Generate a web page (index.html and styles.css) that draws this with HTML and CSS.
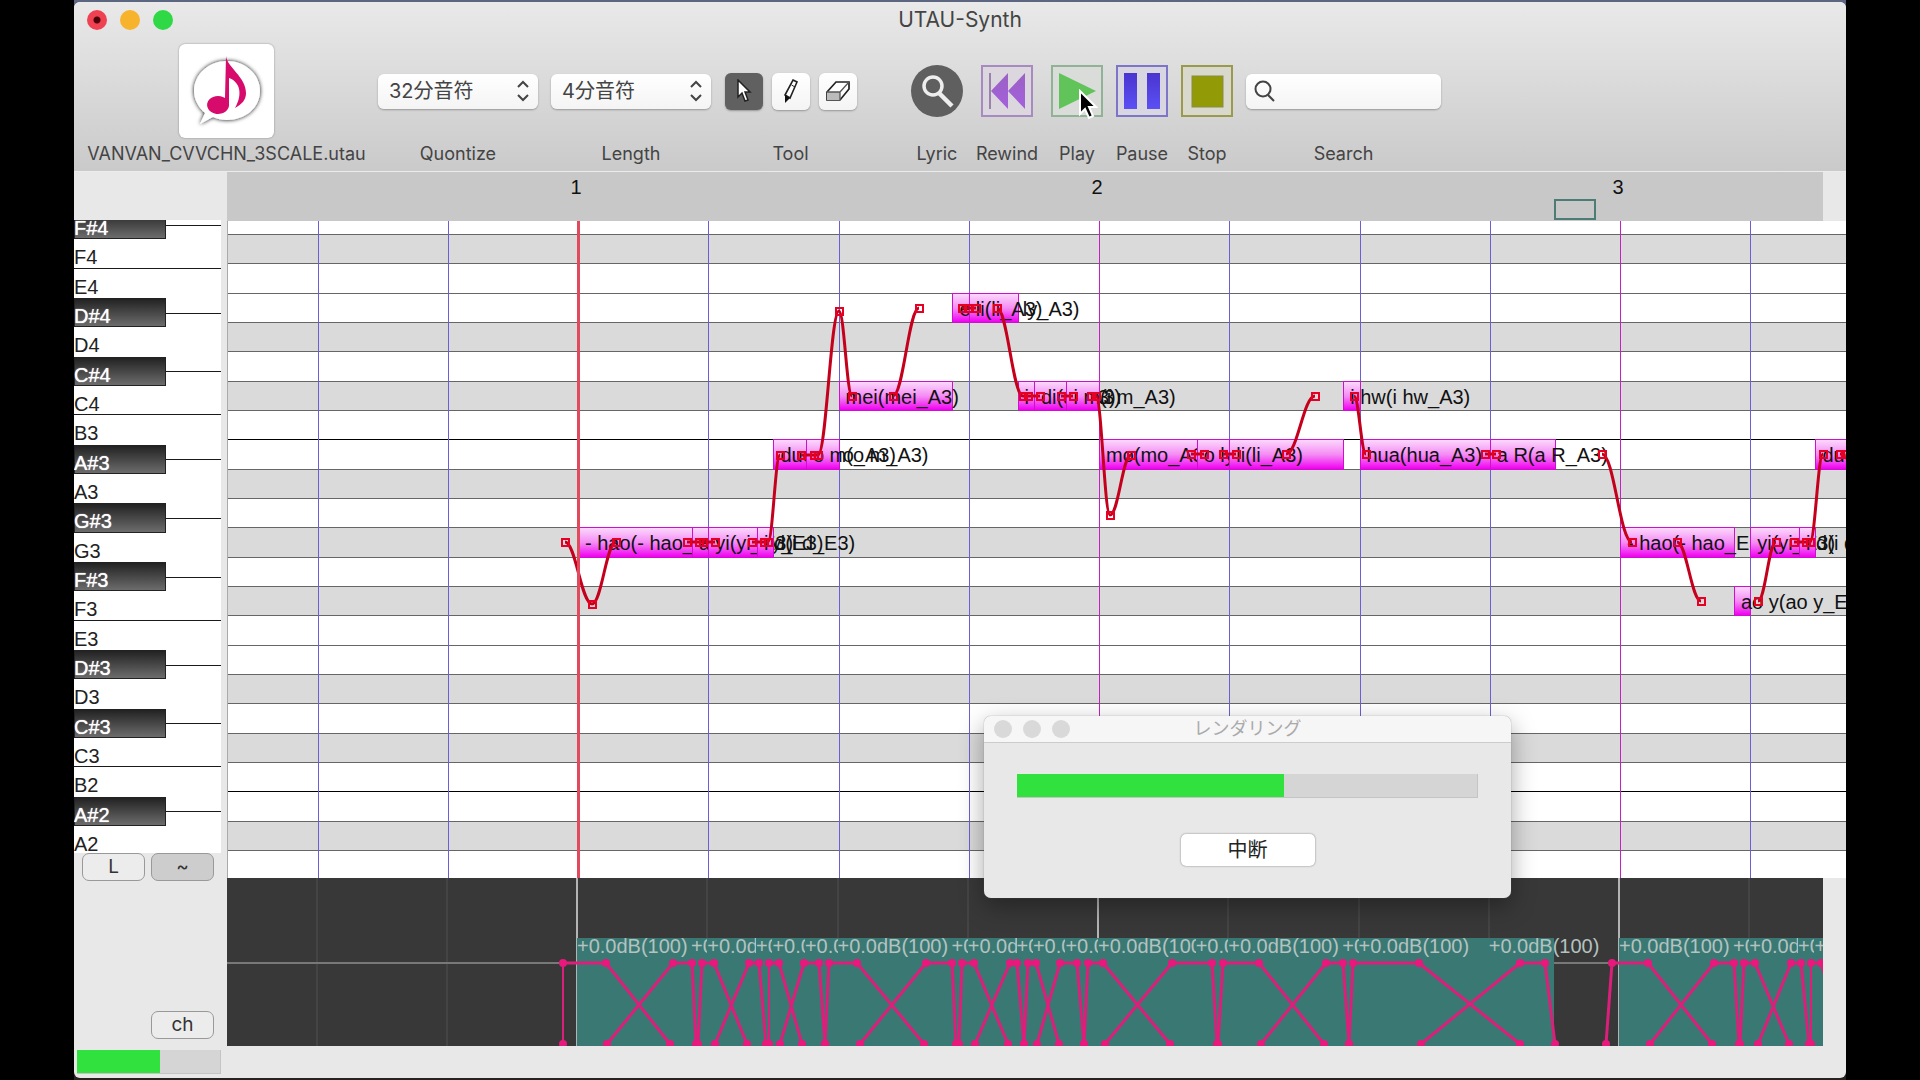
FILE: index.html
```html
<!DOCTYPE html>
<html lang="ja">
<head>
<meta charset="utf-8">
<title>UTAU-Synth</title>
<link rel="stylesheet" href="styles.css">
</head>
<body>
<div class="desktop">
<main class="window">
  <header class="header">
    <div class="titlebar">
      <div class="lights">
        <button class="light light-close" aria-label="Close"></button>
        <button class="light light-min" aria-label="Minimize"></button>
        <button class="light light-zoom" aria-label="Zoom"></button>
      </div>
      <h1 class="title">UTAU-Synth</h1>
    </div>
    <div class="toolbar">
      <div class="item item-file">
        <div class="control">
          <svg class="logo" width="95" height="94" viewBox="0 0 95 94" aria-hidden="true">
            <defs><filter id="soft" x="-30%" y="-30%" width="160%" height="160%"><feDropShadow dx="0" dy="0" stdDeviation="2" flood-color="#111" flood-opacity="1"/></filter></defs>
            <path filter="url(#soft)" d="M48 17C66 17 81 30 81 47S66 76 48 76C43 76 38 75 34 73L21 80L26 69C19 63 15 55 15 47C15 30 30 17 48 17Z" fill="#fff"/>
            <path d="M47 12C48 23 67 33 67 49C67 56 63 60 56 64C64 50 61 38 50 34V60A11 9 0 1 1 46 54Z" fill="#d60b6b"/>
          </svg>
        </div>
        <span class="label">VANVAN_CVVCHN_3SCALE.utau</span>
      </div>
      <div class="item item-select">
        <div class="control">
          <select class="select" id="quantize"><option>32分音符</option></select>
          <svg class="chevrons" width="14" height="22" viewBox="0 0 14 22" aria-hidden="true"><path d="M2 7L7 2L12 7M2 15L7 20L12 15"/></svg>
        </div>
        <label class="label" for="quantize">Quontize</label>
      </div>
      <div class="item item-select">
        <div class="control">
          <select class="select" id="length"><option>4分音符</option></select>
          <svg class="chevrons" width="14" height="22" viewBox="0 0 14 22" aria-hidden="true"><path d="M2 7L7 2L12 7M2 15L7 20L12 15"/></svg>
        </div>
        <label class="label" for="length">Length</label>
      </div>
      <div class="item item-tools">
        <div class="control tools">
          <button class="tool tool-on" aria-label="Pointer"><svg width="16" height="24" viewBox="0 0 16 24"><path d="M2 1V18L6 14L9 22L12 21L9 13H14Z" fill="#fff" stroke="#222" stroke-width="1.5"/></svg></button>
          <button class="tool" aria-label="Pencil"><svg width="18" height="26" viewBox="0 0 18 26"><path d="M11 2L15 4L8 20L3 17Z" fill="#fff" stroke="#222" stroke-width="1.6"/><path d="M3 17L8 20L3 25Z" fill="#111"/><path d="M9.500 7L13 9" stroke="#222"/></svg></button>
          <button class="tool" aria-label="Eraser"><svg width="28" height="24" viewBox="0 0 28 24"><path d="M3 13L12 3H25V10L16 21H3Z" fill="#fff" stroke="#222" stroke-width="1.7"/><path d="M3 13H16V21H3Z" fill="#bbb"/><path d="M3 13H16V21M16 13L25 3" fill="none" stroke="#555" stroke-width="1.300"/></svg></button>
        </div>
        <span class="label">Tool</span>
      </div>
      <div class="item item-lyric">
        <div class="control"><button class="icon" aria-label="Lyric"><svg width="52" height="52" viewBox="0 0 52 52"><circle cx="26" cy="26" r="26" fill="#5f5f5f"/><circle cx="22" cy="21" r="9" fill="none" stroke="#eee" stroke-width="3.500"/><path d="M28 28L41 41" stroke="#eee" stroke-width="4.500"/></svg></button></div>
        <span class="label">Lyric</span>
      </div>
      <div class="item item-rewind">
        <div class="control"><button class="icon" aria-label="Rewind"><svg width="52" height="52" viewBox="0 0 52 52"><defs><linearGradient id="gr" x2="0" y2="1"><stop stop-color="#9b62c4"/><stop offset="1" stop-color="#a45fdc"/></linearGradient></defs><rect x="1" y="1" width="50" height="50" fill="#dcd6de" stroke="#a78ac0" stroke-width="2"/><path d="M9 8V44" stroke="#9a82ac" stroke-width="2"/><path d="M27 8V44L10 26ZM44 8V44L27 26Z" fill="url(#gr)"/></svg></button></div>
        <span class="label">Rewind</span>
      </div>
      <div class="item">
        <div class="control"><button class="icon" aria-label="Play"><svg width="52" height="52" viewBox="0 0 52 52"><rect x="1" y="1" width="50" height="50" fill="#dadcda" stroke="#92b296" stroke-width="2"/><path d="M8 8L45 26L8 44Z" fill="#60c45a"/></svg></button></div>
        <span class="label">Play</span>
      </div>
      <div class="item">
        <div class="control"><button class="icon" aria-label="Pause"><svg width="52" height="52" viewBox="0 0 52 52"><defs><linearGradient id="gp" x2="0" y2="1"><stop stop-color="#4a35cf"/><stop offset="1" stop-color="#5b50f4"/></linearGradient></defs><rect x="1" y="1" width="50" height="50" fill="#d8d6e0" stroke="#7d76c8" stroke-width="2"/><path d="M8 8H21V44H8ZM31 8H44V44H31Z" fill="url(#gp)"/></svg></button></div>
        <span class="label">Pause</span>
      </div>
      <div class="item">
        <div class="control"><button class="icon" aria-label="Stop"><svg width="52" height="52" viewBox="0 0 52 52"><rect x="1" y="1" width="50" height="50" fill="#d9d8cc" stroke="#9a9a4c" stroke-width="2"/><rect x="11" y="11" width="31" height="31" fill="#929a06" stroke="#8a8c48"/></svg></button></div>
        <span class="label">Stop</span>
      </div>
      <div class="item item-search">
        <div class="control">
          <input class="search" id="search" type="text">
          <svg class="lens" width="22" height="22" viewBox="0 0 22 22" aria-hidden="true"><circle cx="9" cy="9" r="7.500"/><path d="M14 15L20 21"/></svg>
        </div>
        <label class="label" for="search">Search</label>
      </div>
    </div>
    <svg class="pointer" width="20" height="32" viewBox="0 0 20 32" aria-hidden="true"><path d="M2 2V25L7 20L11 29L15 27L11 18H18Z" fill="#000" stroke="#fff" stroke-width="2"/></svg>
  </header>

  <div class="editor">
    <aside class="side">
      <div class="corner"></div>
      <div class="keys"><div class="keylist" id="keys"></div></div>
      <div class="side-panel">
        <div class="side-row"><button class="small">L</button><button class="small small-on">~</button></div>
        <div class="side-row"><button class="small">ch</button></div>
      </div>
    </aside>
    <section class="score">
      <div class="ruler" id="ruler"><span class="view"></span></div>
      <div class="roll">
        <div class="rows" id="rows"></div>
        <div class="layer" id="lines"></div>
        <div class="layer" id="notes"></div>
        <svg class="curves" id="curves" aria-hidden="true"></svg>
      </div>
      <div class="levels">
        <div class="layer" id="marks"></div>
        <div class="zero"></div>
        <div class="layer" id="events"></div>
        <svg class="curves" id="envelopes" aria-hidden="true"></svg>
      </div>
    </section>
  </div>

  <footer class="status"><div class="meter meter-status"><div class="fill" style="width:58%"></div></div></footer>

  <section class="dialog" role="dialog" aria-labelledby="dialog-title">
    <div class="dialog-bar">
      <div class="dialog-lights"><span></span><span></span><span></span></div>
      <h2 class="dialog-title" id="dialog-title">レンダリング</h2>
    </div>
    <div class="dialog-body">
      <div class="meter meter-dialog"><div class="fill" style="width:58%"></div></div>
      <button class="abort">中断</button>
    </div>
  </section>
</main>
</div>
<script src="app.js"></script>
</body>
</html>
```

FILE: styles.css
```css
* { box-sizing: border-box; }

:root {
  --bar: 521px;
  --octave: 352px;
  --origin: 351px;
  --ui: Inter, "Noto Sans CJK JP", sans-serif;
  --plain: "Liberation Sans", "Noto Sans CJK JP", sans-serif;
}

body { margin: 0; background: #000; font-family: var(--ui); color: #444; }
button, select, input { font: inherit; color: inherit; border: 0; padding: 0; margin: 0; }

.desktop { margin: 0 74px; padding: 2px 0; background: linear-gradient(#5c6680, #2a2d33 50%, #26231f); }
.window { position: relative; background: #e8e8e8; border-radius: 6px; overflow: hidden; }

/* header */
.header { position: relative; height: 170px; background: linear-gradient(#e9e9e9, #cacaca); border-bottom: 1px solid #ececec; }
.titlebar { display: grid; grid-template-columns: 1fr auto 1fr; align-items: center; height: 36px; padding: 0 13px; }
.lights { display: flex; gap: 13px; }
.light { width: 20px; height: 20px; border-radius: 50%; }
.light-close { background: radial-gradient(#4a0006 3px, #ef4152 4px); }
.light-min { background: #f7b32c; }
.light-zoom { background: #2fd945; }
.title { margin: 0; font-size: 21px; line-height: 24px; font-weight: 400; }
.toolbar { display: flex; gap: 13px; padding: 6px 14px 0; }
.item { display: flex; flex-direction: column; align-items: center; width: 52px; }
.item-file { width: 277px; }
.item-select { width: 160px; }
.item-tools { width: 133px; }
.item-lyric { margin-left: 41px; }
.item-rewind { width: 62px; }
.item-search { width: 195px; }
.control { position: relative; display: flex; align-items: center; height: 94px; }
.item-file .control { background: #fff; border-radius: 6px; box-shadow: 0 0 2px rgba(0, 0, 0, .4); }
.label { margin-top: 4px; font-size: 18px; line-height: 24px; white-space: nowrap; }
.select { appearance: none; width: 160px; height: 35px; padding: 0 11px; border-radius: 6px; background: linear-gradient(#fff, #f4f4f4); box-shadow: 0 1px 2px rgba(0, 0, 0, .3); font-size: 20px; }
.chevrons { position: absolute; right: 8px; fill: none; stroke: #444; stroke-width: 2; pointer-events: none; }
.tools { gap: 9px; }
.tool { display: flex; align-items: center; justify-content: center; width: 38px; height: 37px; border-radius: 6px; background: linear-gradient(#fff, #f4f4f4); box-shadow: 0 1px 2px rgba(0, 0, 0, .3); }
.tool-on { background: #606060; }
.icon { display: block; width: 52px; height: 52px; background: none; }
.icon svg { display: block; }
.search { width: 195px; height: 35px; padding: 0 8px 0 36px; border-radius: 6px; background: linear-gradient(#fff, #f4f4f4); box-shadow: 0 1px 2px rgba(0, 0, 0, .3); font-size: 18px; }
.lens { position: absolute; left: 8px; fill: none; stroke: #444; stroke-width: 2; }
.pointer { position: absolute; left: 1004px; top: 87px; }

/* editor */
.editor { display: grid; grid-template-columns: 153px minmax(0, 1fr); }
.side { display: flex; flex-direction: column; }
.corner { height: 48px; }
.keys { height: 633px; width: 147px; overflow: hidden; background: #fff; font-family: var(--plain); font-size: 20px; color: #222; }
.keylist { margin-top: -10px; }
.key { position: relative; display: flex; align-items: center; height: calc(var(--octave) / 12); padding-top: 8px; }
.key-edge { border-bottom: 1px solid #1a1a1a; }
.key-black { color: #fff; text-shadow: 0 0 1px #fff; }
.key-black::before { content: ""; position: absolute; inset: 0 55px 0 0; background: linear-gradient(#222, #6c6c6c); border: 1px solid #222; }
.key-black::after { content: ""; position: absolute; left: 92px; right: 0; top: 50%; height: 1px; background: #1a1a1a; }
.key span { position: relative; }
.side-panel { flex: 1; display: flex; flex-direction: column; justify-content: space-between; padding: 0 13px 7px 8px; }
.side-row { display: flex; justify-content: flex-end; gap: 6px; }
.small { width: 63px; height: 28px; border: 1px solid #999; border-radius: 7px; background: #ececec; color: #333; font-size: 19px; line-height: 26px; }
.small-on { background: #cdcdcd; }

.score { display: flex; flex-direction: column; min-width: 0; }
.ruler { position: relative; height: 49px; margin-right: 23px; background: #c8c8c8; overflow: hidden; font-family: var(--plain); color: #111; }
.bar-number { position: absolute; top: 3px; left: calc(var(--origin) + var(--bar) * var(--n)); width: 20px; margin-left: -12px; text-align: center; font-size: 20px; line-height: 24px; }
.view { position: absolute; left: 1327px; bottom: 1px; width: 42px; height: 21px; border: 2px solid #4d7c76; }
.roll { position: relative; overflow: hidden; padding-top: 13px; background: #fff; border-left: 1px solid #aaa; }
.row { height: calc(var(--octave) / 12); border-top: 1px solid #666; }
.row-dark { background: #dadada; }
.row-c { border-color: #000; }
.row:last-child { height: 28px; }
.layer { position: absolute; inset: 0; }
.line { position: absolute; top: 0; bottom: 0; left: calc(var(--origin) + var(--bar) * var(--t) / 32 - 1px); width: 1px; background: #6a5fd6; }
.line-bar { background: #c321c3; }
.line-play { width: 3px; margin-left: -1px; background: #e04a5c; z-index: 1; }
.note { position: absolute; left: calc(var(--origin) + var(--bar) * var(--t) / 32 - 1px); top: calc(13px + var(--octave) * var(--row) / 12); width: calc(var(--bar) * var(--len) / 32 + 1px); height: calc(var(--octave) / 12 + 1px); padding: 1px 0 0 6px; border: 1px solid #cc10cc; background: linear-gradient(#fbd8fb, #f58cf5 50%, #f000f0); font-family: var(--plain); font-size: 20px; line-height: 28px; color: #111; white-space: nowrap; }
.curves { position: absolute; left: 0; top: 0; width: 100%; height: 100%; fill: none; }
.curve { stroke: #c4001c; stroke-width: 3; }
.handle { stroke: #e60024; stroke-width: 2; }

/* levels */
.levels { position: relative; height: 168px; margin-right: 23px; background: #383838; overflow: hidden; }
.mark { position: absolute; top: 0; bottom: 0; left: calc(var(--origin) + var(--bar) * var(--t) / 32 - 2px); width: 2px; background: #444; }
.mark-bar { background: #b4b4b4; }
.zero { position: absolute; left: 0; right: 0; top: 84px; height: 2px; background: #787878; }
.event { position: absolute; bottom: 0; left: calc(var(--origin) + var(--bar) * var(--t) / 32 - 1px); width: calc(var(--bar) * var(--len) / 32); height: 108px; background: #3a7873; color: #b4c2c0; font-family: var(--plain); font-size: 20px; line-height: 17px; white-space: nowrap; }
.envelope { stroke: #db1f7a; stroke-width: 3; }
.envelope-edge { stroke-width: 2; }
.knob { fill: #e8187c; }

.status { display: flex; align-items: center; height: 32px; padding: 0 3px; }
.meter { background: #d5d5d5; border: 1px solid #c4c4c4; border-width: 0 1px 1px 0; }
.fill { height: 100%; background: #31e13e; }
.meter-status { width: 144px; height: 24px; }

/* dialog */
.dialog { position: absolute; left: 910px; top: 714px; width: 527px; background: #e8e8e8; border-radius: 7px; box-shadow: 0 0 1px #666, 0 8px 24px rgba(0, 0, 0, .35); overflow: hidden; }
.dialog-bar { display: grid; grid-template-columns: 1fr auto 1fr; align-items: center; height: 27px; padding: 0 10px; background: #f6f6f6; border-bottom: 1px solid #ccc; }
.dialog-lights { display: flex; gap: 11px; }
.dialog-lights span { width: 18px; height: 18px; border-radius: 50%; background: #d9d9d9; }
.dialog-title { margin: 0; font-size: 18px; line-height: 24px; font-weight: 400; color: #aaa; }
.dialog-body { display: flex; flex-direction: column; align-items: center; gap: 36px; padding: 31px 33px 32px; }
.meter-dialog { width: 100%; height: 24px; }
.abort { width: 134px; height: 32px; border-radius: 5px; background: #fff; box-shadow: 0 0 2px rgba(0, 0, 0, .5); color: #222; font-size: 20px; line-height: 30px; }
```

FILE: app.js
```js
const byId = (id) => document.getElementById(id);

function add(parent, cls, vars, text) {
  const el = document.createElement("div");
  el.className = cls;
  for (const name in vars) el.style.setProperty("--" + name, vars[name]);
  if (text !== undefined) el.textContent = text;
  parent.append(el);
  return el;
}

// keyboard, highest pitch first
"F#4 F4 E4 D#4 D4 C#4 C4 B3 A#3 A3 G#3 G3 F#3 F3 E3 D#3 D3 C#3 C3 B2 A#2 A2".split(" ").forEach((name) => {
  const cls = name.includes("#") ? "key key-black" : /[FC]/.test(name) ? "key key-edge" : "key";
  const key = add(byId("keys"), cls, {});
  const label = document.createElement("span");
  label.textContent = name;
  key.append(label);
});

// roll rows: shaded semitones and octave borders repeat every twelve
for (let i = 0; i < 22; i++) {
  const step = i % 12;
  let cls = "row";
  if ([0, 3, 5, 8, 10].includes(step)) cls += " row-dark";
  if (step === 7) cls += " row-c";
  add(byId("rows"), cls, {});
}

// beats, in 32nd notes from bar 1
for (let t = -16; t < 160; t += 8) {
  add(byId("lines"), t === 0 ? "line line-play" : t > 0 && t % 32 === 0 ? "line line-bar" : "line", { t });
  add(byId("marks"), t >= 0 && t % 32 === 0 ? "mark mark-bar" : "mark", { t });
}
for (let n = 0; n < 5; n++) add(byId("ruler"), "bar-number", { n }, n + 1);

// start, length, row, lyric
const notes = [
  [0, 7, 10, "- hao(- hao_E3)"], [7, 1, 10, "ao y(ao y_E3)"], [8, 3, 10, "yi(yi_E3)"], [11, 1, 10, "i d(i d_E3)"],
  [12, 2, 7, "duo(duo_A3)"], [14, 2, 7, "o m(o m_A3)"], [16, 7, 5, "mei(mei_A3)"],
  [23, 1, 2, "ei ly(ei ly_A3)"], [24, 3, 2, "li(li_A3)"], [27, 1, 5, "i d(i d_A3)"], [28, 2, 5, "di(di_A3)"], [30, 2, 5, "i m(i m_A3)"],
  [32, 6, 7, "mo(mo_A3)"], [38, 2, 7, "o ly(o ly_A3)"], [40, 7, 7, "li(li_A3)"], [47, 1, 5, "i hw(i hw_A3)"],
  [48, 8, 7, "hua(hua_A3)"], [56, 4, 7, "a R(a R_A3)"],
  [64, 7, 10, "- hao(- hao_E3)"], [71, 1, 12, "ao y(ao y_E3)"], [72, 3, 10, "yi(yi_E3)"], [75, 1, 10, "i d(i d_E3)"], [76, 2, 7, "duo(duo_A3)"]
];
for (const [t, len, row, lyric] of notes) {
  add(byId("notes"), "note", { t, len, row }, lyric);
  add(byId("events"), "event", { t, len }, "+0.0dB(100)");
}

function shape(parent, tag, attrs) {
  const el = document.createElementNS("http://www.w3.org/2000/svg", tag);
  for (const name in attrs) el.setAttribute(name, attrs[name]);
  parent.append(el);
}

// pitch bends: handle positions on the roll
const bends = [
  [[337, 321], [364, 383], [388, 321]],
  [[459, 321], [471, 321], [475, 321], [487, 321]],
  [[524, 321], [536, 321], [540, 321], [552, 234]],
  [[573, 234], [586, 234], [590, 234], [611, 90], [624, 175]],
  [[665, 175], [691, 87]],
  [[734, 87], [740, 87], [748, 87]],
  [[769, 87], [795, 175], [800, 175], [812, 175]],
  [[833, 175], [845, 175]],
  [[863, 175], [868, 175], [882, 294], [903, 234]],
  [[963, 233], [976, 233]],
  [[995, 233], [1008, 233]],
  [[1058, 233], [1087, 175]],
  [[1126, 175], [1138, 233]],
  [[1257, 233], [1268, 233]],
  [[1374, 233], [1404, 321]],
  [[1449, 321], [1473, 380]],
  [[1530, 380], [1548, 321]],
  [[1566, 321], [1578, 321], [1582, 321], [1595, 233]],
  [[1612, 233], [1617, 233]]
];
for (const points of bends) {
  let d = "";
  points.forEach(([x, y], i) => {
    if (i === 0) { d = `M${x} ${y}`; return; }
    const [px, py] = points[i - 1];
    const pull = (x - px) * 0.4;
    d += `C${px + pull} ${py} ${x - pull} ${y} ${x} ${y}`;
  });
  shape(byId("curves"), "path", { class: "curve", d });
  for (const [x, y] of points) shape(byId("curves"), "rect", { class: "handle", x: x - 3, y: y - 3, width: 7, height: 7 });
}

// volume envelopes: attack foot, attack top, release top, release foot
const envelopes = [
  [336, 336, 379, 443], [380, 446, 465, 469], [471, 475, 487, 520], [488, 522, 532, 539], [542, 542, 552, 575],
  [553, 577, 592, 598], [598, 602, 630, 697], [633, 699, 725, 729], [732, 735, 747, 781], [748, 783, 790, 797],
  [797, 801, 809, 832], [810, 833, 850, 857], [857, 861, 876, 943], [878, 945, 985, 990], [991, 996, 1032, 1097],
  [1034, 1099, 1116, 1122], [1122, 1126, 1192, 1293], [1194, 1293, 1318, 1328],
  [1379, 1385, 1421, 1485], [1423, 1487, 1507, 1512], [1513, 1517, 1528, 1562], [1531, 1564, 1574, 1582], [1584, 1584, 1594, 1618]
];
for (const [a, b, c, d] of envelopes) {
  const svg = byId("envelopes");
  shape(svg, "path", { class: a === b ? "envelope envelope-edge" : "envelope", d: `M${a} 166L${b} 85` });
  shape(svg, "path", { class: "envelope", d: `M${b} 85H${c}L${d} 166` });
  for (const [x, y] of [[a, 166], [b, 85], [c, 85], [d, 166]]) shape(svg, "circle", { class: "knob", cx: x, cy: y, r: 4 });
}
```
